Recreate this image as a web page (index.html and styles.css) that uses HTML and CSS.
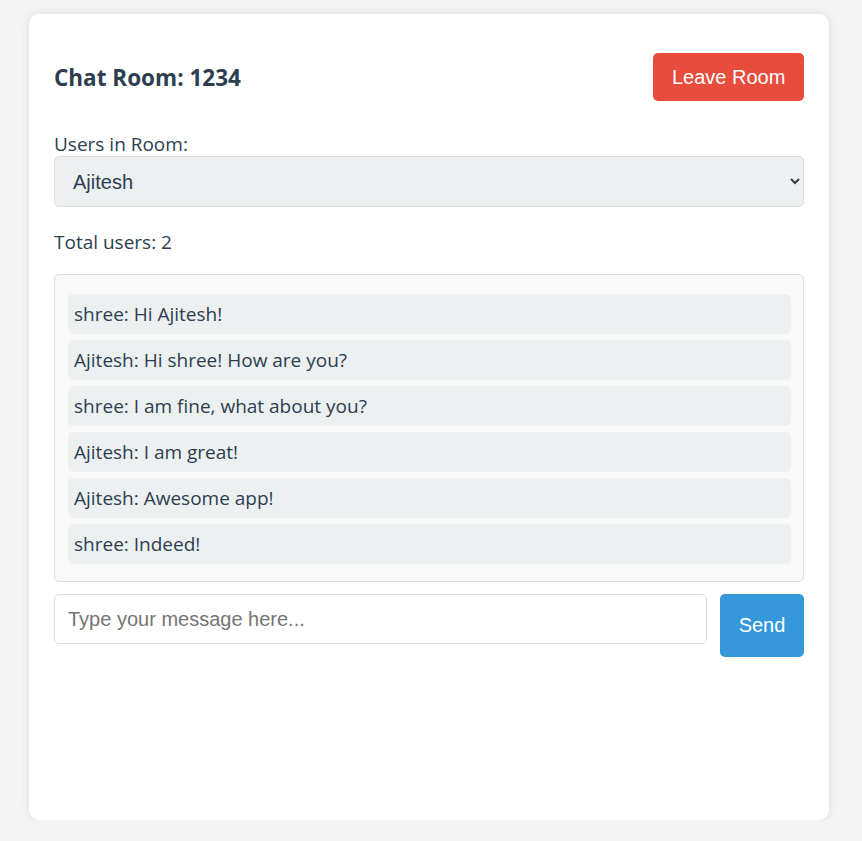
FILE: index.html
```html
<!DOCTYPE html>
<html lang="en">
<head>
<meta charset="utf-8">
<title>Chat Room</title>
<link rel="stylesheet" href="styles.css">
</head>
<body>
<div class="card">
  <div class="header">
    <h2 class="title">Chat Room: 1234</h2>
    <button class="btn btn-leave">Leave Room</button>
  </div>
  <label class="label" for="users">Users in Room:</label>
  <select class="select" id="users">
    <option>Ajitesh</option>
    <option>shree</option>
  </select>
  <p class="total">Total users: 2</p>
  <div class="messages">
    <div class="msg">shree: Hi Ajitesh!</div>
    <div class="msg">Ajitesh: Hi shree! How are you?</div>
    <div class="msg">shree: I am fine, what about you?</div>
    <div class="msg">Ajitesh: I am great!</div>
    <div class="msg">Ajitesh: Awesome app!</div>
    <div class="msg">shree: Indeed!</div>
  </div>
  <div class="composer">
    <input class="input" type="text" placeholder="Type your message here...">
    <button class="btn btn-send">Send</button>
  </div>
</div>
</body>
</html>
```
FILE: styles.css
```css
* { box-sizing: border-box; }
html, body { margin: 0; padding: 0; }
body {
  background: #f4f4f4;
  font-family: "Open Sans", "Noto Sans", sans-serif;
  font-size: 19px;
  color: #2c3e50;
}
.card {
  width: 800px;
  height: 806px;
  margin: 14px auto 0;
  background: #fff;
  border-radius: 10px;
  box-shadow: 0 0 10px rgba(0,0,0,0.1);
  padding: 25px;
  position: relative;
  left: -2px;
}
.header {
  display: flex;
  align-items: center;
  justify-content: space-between;
  margin-top: 14px;
  height: 48px;
}
.title {
  margin: 0;
  font-size: 22.5px;
  font-weight: 700;
  color: #2c3e50;
}
.btn {
  border: none;
  border-radius: 5px;
  color: #fff;
  font-family: "Liberation Sans", Arial, sans-serif;
  font-size: 20px;
  white-space: nowrap;
  cursor: pointer;
}
.btn-leave {
  background: #e74c3c;
  height: 48px;
  padding: 0 19px;
  width: 151px;
}
.label {
  display: block;
  margin-top: 31px;
  line-height: 24px;
}
.select {
  display: block;
  width: 100%;
  height: 51px;
  margin: 0;
  padding: 0 12px 0 14px;
  font-family: "Liberation Sans", Arial, sans-serif;
  font-size: 20px;
  color: #2c3e50;
  background: #ecf0f1;
  border: 1px solid #ddd;
  border-radius: 5px;
}
.total {
  margin: 23px 0 0;
  line-height: 24px;
}
.messages {
  margin-top: 20px;
  height: 308px;
  background: #f9f9f9;
  border: 1px solid #ddd;
  border-radius: 5px;
  padding: 19px 12px 19px 13px;
  display: flex;
  flex-direction: column;
  gap: 6px;
}
.msg {
  background: #ecf0f1;
  border-radius: 5px;
  padding: 8px 6px;
  line-height: 24px;
  height: 40px;
}
.composer {
  display: flex;
  align-items: flex-start;
  gap: 13px;
  margin-top: 12px;
}
.input {
  flex: 1;
  height: 50px;
  padding: 0 13px;
  font-family: "Liberation Sans", Arial, sans-serif;
  font-size: 20px;
  color: #2c3e50;
  border: 1px solid #ddd;
  border-radius: 5px;
  outline: none;
}
.input::placeholder { color: #757575; }
.btn-send {
  background: #3498db;
  width: 84px;
  height: 63px;
  padding: 0;
}
```
